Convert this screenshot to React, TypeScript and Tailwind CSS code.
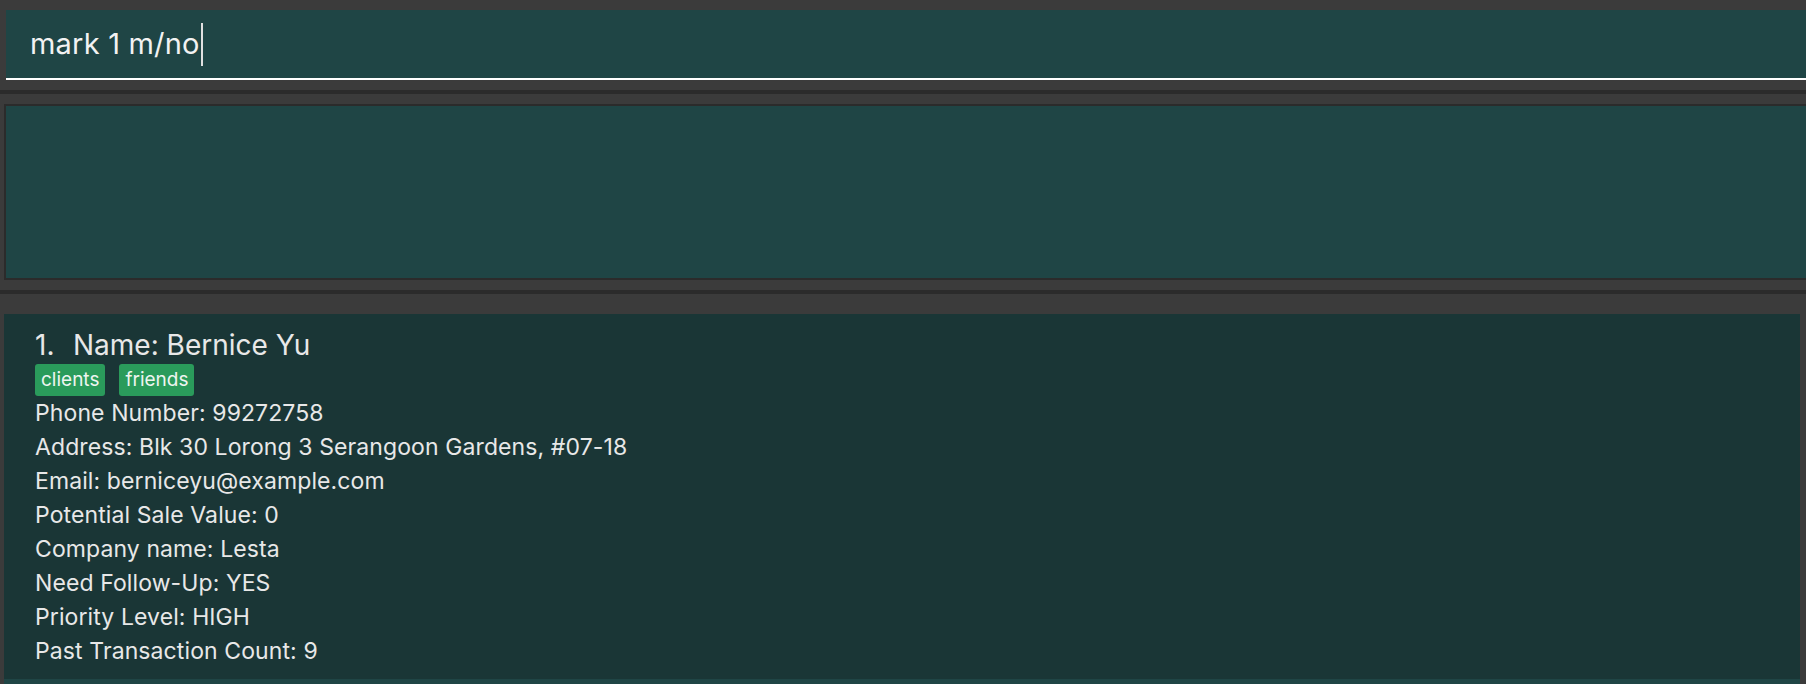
import React from "react";

const details = [
  "Phone Number: 99272758",
  "Address: Blk 30 Lorong 3 Serangoon Gardens, #07-18",
  "Email: berniceyu@example.com",
  "Potential Sale Value: 0",
  "Company name: Lesta",
  "Need Follow-Up: YES",
  "Priority Level: HIGH",
  "Past Transaction Count: 9",
];

const tags = ["clients", "friends"];

function CommandBox() {
  return (
    <div className="pt-[10px] pl-[6px]">
      <div className="h-[70px] bg-[#1f4545] border-b-2 border-white flex items-center pl-[24px]">
        <span className="text-[29px] text-[#f2f2f2] tracking-[0.2px]">mark 1 m/no</span>
        <span className="w-[2px] h-[43px] bg-[#e0e0e0] ml-[1px]" />
      </div>
    </div>
  );
}

function ResultBox() {
  return (
    <div className="pl-[4px]">
      <div className="h-[176px] bg-[#1f4545] border-y-2 border-l-2 border-[#2b2b2b]" />
    </div>
  );
}

function PersonCard() {
  return (
    <div className="bg-[#1a3636] pl-[31px] pt-[13px] pb-[11px] text-[#e8e8e8]">
      <div className="text-[28px] leading-[36px] flex">
        <span className="w-[38px]">1.</span>
        <span>Name: Bernice Yu</span>
      </div>
      <div className="flex gap-[14px] mt-[1px]">
        {tags.map((t) => (
          <span
            key={t}
            className="h-[32px] px-[6px] flex items-center rounded-[3px] bg-[#2a9b5b] text-[19px] text-[#eef5f0]"
          >
            {t}
          </span>
        ))}
      </div>
      <div className="text-[23px] leading-[34px] tracking-[0.1px]">
        {details.map((d) => (
          <div key={d}>{d}</div>
        ))}
      </div>
    </div>
  );
}

export default function App() {
  return (
    <div
      className="w-full h-[684px] bg-[#3b3b3b] overflow-hidden"
      style={{ fontFamily: "Inter, 'Noto Sans', sans-serif" }}
    >
      <CommandBox />
      <div className="h-[10px]" />
      <div className="h-[4px] bg-[#2b2b2b]" />
      <div className="h-[10px]" />
      <ResultBox />
      <div className="h-[10px]" />
      <div className="h-[4px] bg-[#2b2b2b]" />
      <div className="h-[20px]" />
      <div className="pl-[4px] pr-[6px]">
        <PersonCard />
        <div className="h-[40px] bg-[#1f4545]" />
      </div>
    </div>
  );
}
